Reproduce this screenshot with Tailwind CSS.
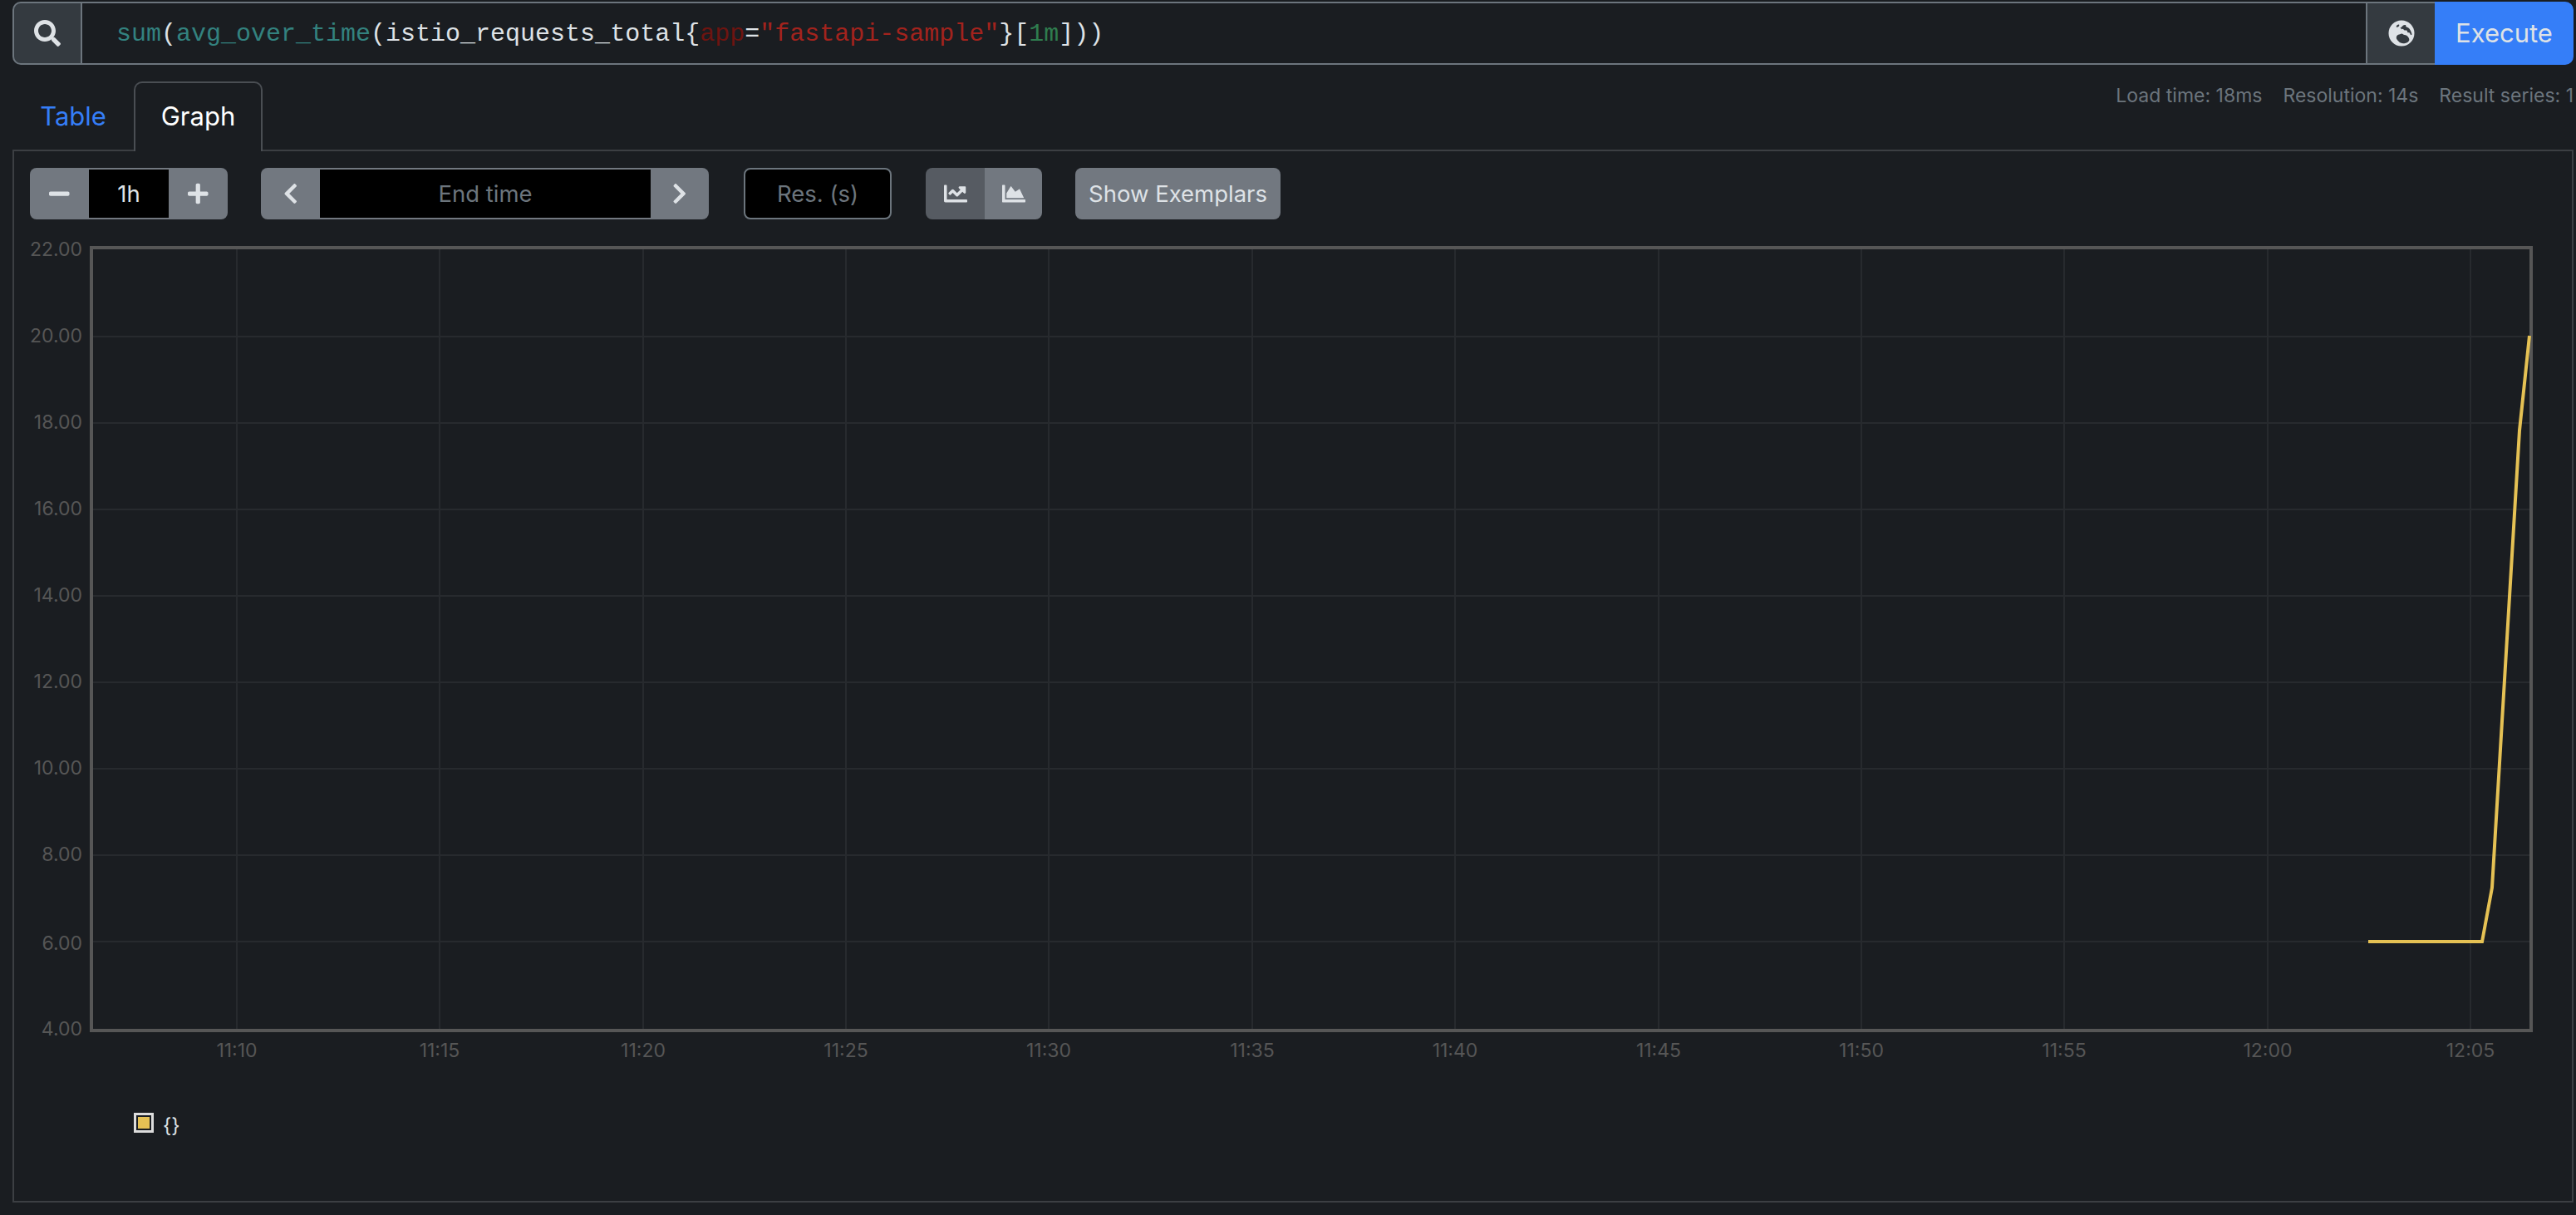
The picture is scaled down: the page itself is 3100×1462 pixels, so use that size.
<!DOCTYPE html>
<html lang="en">
  <head>
    <meta charset="UTF-8" />
    <title>Prometheus Graph</title>
    <script src="https://cdn.jsdelivr.net/npm/@tailwindcss/browser@4"></script>
  </head>
  <body class="bg-[#1a1d21] font-[Inter,sans-serif]">
    <div class="w-[3100px] h-[1462px] overflow-hidden pt-[2px] pl-[15px] pr-[3px]">
      <!-- Query bar -->
      <div class="flex h-[76px] w-[3082px]">
        <div class="flex w-[84px] items-center justify-center rounded-l-[10px] border-2 border-[#6c757d] bg-[#343a40]">
          <svg class="h-8 w-8 fill-[#dee2e6]" viewBox="0 0 512 512"><path d="M505 442.7L405.3 343c-4.5-4.5-10.6-7-17-7H372c27.6-35.3 44-79.7 44-128C416 93.1 322.9 0 208 0S0 93.1 0 208s93.1 208 208 208c48.3 0 92.7-16.4 128-44v16.3c0 6.4 2.5 12.5 7 17l99.7 99.7c9.4 9.4 24.6 9.4 33.9 0l28.3-28.3c9.4-9.4 9.4-24.6.1-34zM208 336c-70.7 0-128-57.2-128-128 0-70.7 57.2-128 128-128 70.7 0 128 57.2 128 128 0 70.7-57.2 128-128 128z"/></svg>
        </div>
        <div class="flex flex-1 items-center border-y-2 border-[#6c757d] pl-[41px] pt-[2px] font-['Liberation_Mono',monospace] text-[30px] text-[#dee2e6]">
          <span class="whitespace-pre"><span class="text-[#33827f]">sum</span>(<span class="text-[#33827f]">avg_over_time</span>(istio_requests_total{<span class="text-[#6e1410]">app</span>=<span class="text-[#a3231d]">"fastapi-sample"</span>}[<span class="text-[#2f7d4f]">1m</span>]))</span>
        </div>
        <div class="flex w-[83px] items-center justify-center border-2 border-r-0 border-[#6c757d] bg-[#343a40]">
          <svg class="h-8 w-8" viewBox="0 0 32 32">
            <circle cx="16" cy="16" r="15.5" class="fill-[#dee2e6]" />
            <path class="fill-[#343a40]" d="M9.7 8c.3-1.6 1.8-2.8 3-2.6.9.2.7 1.6 0 2.3-.7.8-3 1.5-3 .3zM14 10c1.5-.3 2.2-1.8 3.5-3 1-.9 2.6-1.2 3.8-.7-.3 1-.1 1.7.8 2.2 1 .5 2.5.8 3.3 2 1.2 1.6 2.4 3.8 3 6.2.1.9-.2 1.6-.8 1.4-1-.3-1.3-1.7-1.6-2.7-.8-.3-1.8.1-2.5-.5-.8-.8-.4-1.9-1.4-2.4-1-.4-1.8.4-2.8-.2-.8-.5-.6-1.2-1.4-1.4-.8-.2-1.2.6-2 .4-.6-.1-.6-.9.1-1.3zM9.8 21c.2-2 1.8-3.3 3.4-3.4 1.3-.1 1.8-1 3-1 1.4 0 2 1.2 3.4 1.5 1.5.3 3 .6 4 2 1 1.3 2 2.8 1.7 4.4-.6 1.6-3 3.5-6 3.8-3 .3-5.2-.8-6.5-2.2-1.3-1.4-3.2-3.1-3-5.1z" />
          </svg>
        </div>
        <button class="w-[167px] rounded-r-[10px] bg-[#357ef8] pt-[1px] text-[31px] text-[#dee2e6]">Execute</button>
      </div>

      <!-- Tabs -->
      <div class="mt-[20px] flex h-[84px] w-[3082px] border-b-2 border-[#3c3f43]">
        <div class="flex w-[146px] items-center justify-center pt-[2px] text-[31px] text-[#357ef8]">Table</div>
        <div class="-mb-[2px] flex h-[84px] w-[155px] items-center justify-center rounded-t-[10px] border-2 border-b-0 border-[#4a4e53] bg-[#1a1d21] pb-[2px] text-[31px] text-white">Graph</div>
        <div class="ml-auto flex gap-[25px] pt-[2px] text-[23px] leading-[30px] text-[#6c757d]">
          <span>Load time: 18ms</span>
          <span>Resolution: 14s</span>
          <span>Result series: 1</span>
        </div>
      </div>

      <!-- Graph panel -->
      <div class="h-[1265px] w-[3082px] border-x-2 border-b-2 border-[#3c3f43] pt-[20px]">
        <div class="flex h-[62px] pl-[19px] text-[27.5px]">
          <div class="flex w-[238px] overflow-hidden rounded-[8px] bg-[#727880]">
            <div class="flex w-[71px] items-center justify-center">
              <svg class="h-7 w-[24.5px] fill-[#dee2e6]" viewBox="0 0 448 512"><path d="M416 208H32c-17.67 0-32 14.33-32 32v32c0 17.67 14.33 32 32 32h384c17.67 0 32-14.33 32-32v-32c0-17.67-14.33-32-32-32z"/></svg>
            </div>
            <div class="flex w-[96px] items-center justify-center border-y-2 border-[#727880] bg-black pt-[2px] text-[#dee2e6]">1h</div>
            <div class="flex w-[71px] items-center justify-center">
              <svg class="h-7 w-[24.5px] fill-[#dee2e6]" viewBox="0 0 448 512"><path d="M416 208H272V64c0-17.67-14.33-32-32-32h-32c-17.67 0-32 14.33-32 32v144H32c-17.67 0-32 14.33-32 32v32c0 17.67 14.33 32 32 32h144v144c0 17.67 14.33 32 32 32h32c17.67 0 32-14.33 32-32V304h144c17.67 0 32-14.33 32-32v-32c0-17.67-14.33-32-32-32z"/></svg>
            </div>
          </div>
          <div class="ml-[40px] flex w-[539px] overflow-hidden rounded-[8px] bg-[#727880]">
            <div class="flex w-[71px] items-center justify-center">
              <svg class="h-7 w-[17.5px] fill-[#dee2e6]" viewBox="0 0 320 512"><path d="M34.52 239.03L228.87 44.69c9.37-9.37 24.57-9.37 33.94 0l22.67 22.67c9.36 9.36 9.37 24.52.04 33.9L131.49 256l154.02 154.75c9.34 9.38 9.32 24.54-.04 33.9l-22.67 22.67c-9.37 9.37-24.57 9.37-33.94 0L34.52 272.97c-9.37-9.37-9.37-24.57 0-33.94z"/></svg>
            </div>
            <div class="flex w-[398px] items-center justify-center border-y-2 border-[#727880] bg-black pt-[2px] text-[#6c757d]">End time</div>
            <div class="flex w-[70px] items-center justify-center">
              <svg class="h-7 w-[17.5px] fill-[#dee2e6]" viewBox="0 0 320 512"><path d="M285.476 272.971L91.132 467.314c-9.373 9.373-24.569 9.373-33.941 0l-22.667-22.667c-9.357-9.357-9.375-24.522-.04-33.901L188.505 256 34.484 101.255c-9.335-9.379-9.317-24.544.04-33.901l22.667-22.667c9.373-9.373 24.569-9.373 33.941 0L285.475 239.03c9.373 9.372 9.373 24.568.001 33.941z"/></svg>
            </div>
          </div>
          <div class="ml-[42px] flex w-[178px] items-center justify-center rounded-[8px] border-2 border-[#6c757d] bg-black pt-[2px] text-[#6c757d]">Res. (s)</div>
          <div class="ml-[41px] flex w-[140px] overflow-hidden rounded-[8px]">
            <div class="flex w-[71px] items-center justify-center bg-[#565b62]">
              <svg class="h-7 w-7 fill-[#dee2e6]" viewBox="0 0 512 512"><path d="M496 384H64V80c0-8.84-7.16-16-16-16H16C7.16 64 0 71.16 0 80v336c0 17.67 14.33 32 32 32h464c8.84 0 16-7.16 16-16v-32c0-8.84-7.16-16-16-16zM464 96H345.94c-21.38 0-32.09 25.85-16.97 40.97l32.4 32.4L288 242.75l-73.37-73.37c-12.5-12.5-32.76-12.5-45.25 0l-68.69 68.69c-6.25 6.25-6.25 16.38 0 22.63l22.62 22.62c6.25 6.25 16.38 6.25 22.63 0L192 237.25l73.37 73.37c12.5 12.5 32.76 12.5 45.25 0l96-96 32.4 32.4c15.12 15.12 40.97 4.41 40.97-16.97V112c.01-8.84-7.15-16-16-16z"/></svg>
            </div>
            <div class="flex w-[69px] items-center justify-center bg-[#727880]">
              <svg class="h-7 w-7 fill-[#dee2e6]" viewBox="0 0 512 512"><path d="M500 384c6.6 0 12 5.4 12 12v40c0 6.6-5.4 12-12 12H12c-6.6 0-12-5.4-12-12V76c0-6.6 5.4-12 12-12h40c6.6 0 12 5.4 12 12v308h436zM372.7 159.5L288 216l-85.3-113.7c-5.1-6.8-15.5-6.3-19.9 1L96 248v104h384l-89.9-187.8c-3.2-6.5-11.4-8.7-17.4-4.7z"/></svg>
            </div>
          </div>
          <div class="ml-[40px] flex w-[247px] items-center justify-center rounded-[8px] bg-[#727880] pt-[2px] text-[#dee2e6]">Show Exemplars</div>
        </div>

        <!-- Plot: viewBox uses page coordinates -->
        <svg class="mt-[16px] block font-[Inter,sans-serif] text-[23px]" width="3078" height="1020" viewBox="17 280 3078 1020">
          <g class="stroke-[#272a2e]" stroke-width="2">
            <path d="M112 405H3044M112 509H3044M112 613H3044M112 717H3044M112 821H3044M112 925H3044M112 1029H3044M112 1133H3044" />
            <path d="M285 300V1238M529 300V1238M774 300V1238M1018 300V1238M1262 300V1238M1507 300V1238M1751 300V1238M1996 300V1238M2240 300V1238M2484 300V1238M2729 300V1238M2973 300V1238" />
          </g>
          <rect x="110" y="298" width="2936" height="942" fill="none" stroke-width="4" class="stroke-[#565656]" />
          <polyline points="2850,1133 2987,1133 2999,1068 3032,518 3044,404" fill="none" stroke-width="4" class="stroke-[#e5c154]" />
          <g class="fill-[#565656]" text-anchor="end">
            <text x="99" y="308">22.00</text>
            <text x="99" y="412">20.00</text>
            <text x="99" y="516">18.00</text>
            <text x="99" y="620">16.00</text>
            <text x="99" y="724">14.00</text>
            <text x="99" y="828">12.00</text>
            <text x="99" y="932">10.00</text>
            <text x="99" y="1036">8.00</text>
            <text x="99" y="1143">6.00</text>
            <text x="99" y="1246">4.00</text>
          </g>
          <g class="fill-[#565656]" text-anchor="middle">
            <text x="285" y="1272">11:10</text>
            <text x="529" y="1272">11:15</text>
            <text x="774" y="1272">11:20</text>
            <text x="1018" y="1272">11:25</text>
            <text x="1262" y="1272">11:30</text>
            <text x="1507" y="1272">11:35</text>
            <text x="1751" y="1272">11:40</text>
            <text x="1996" y="1272">11:45</text>
            <text x="2240" y="1272">11:50</text>
            <text x="2484" y="1272">11:55</text>
            <text x="2729" y="1272">12:00</text>
            <text x="2973" y="1272">12:05</text>
          </g>
        </svg>

        <!-- Legend -->
        <div class="mt-[39px] flex items-start pl-[144px]">
          <div class="h-6 w-6 border-[3px] border-[#dcdcdc] p-[2px]"><div class="h-full w-full bg-[#e5c154]"></div></div>
          <span class="ml-[11px] text-[24px] leading-[32px] text-[#dee2e6]">{}</span>
        </div>
      </div>
    </div>
  </body>
</html>
